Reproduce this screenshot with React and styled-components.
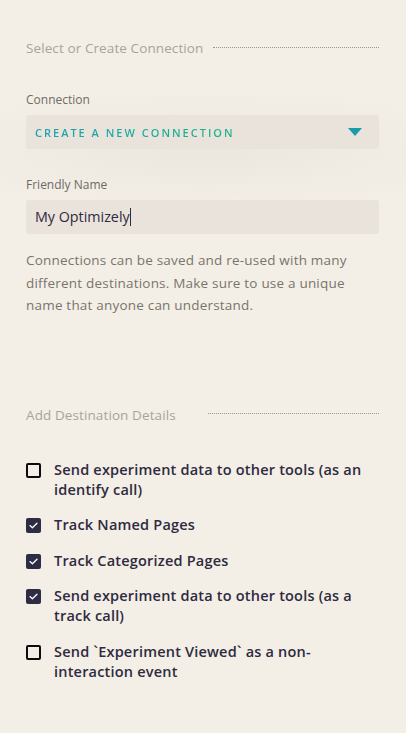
import React from 'react'
import styled, { createGlobalStyle } from 'styled-components'

const Global = createGlobalStyle`
    html, body {
        margin: 0;
        padding: 0;
        background: #f3efe6;
    }
    body {
        font-family: "Open Sans", "Noto Sans", sans-serif;
    }
`

const Page = styled.div`
    min-height: 733px;
    box-sizing: border-box;
    padding: 39px 27px 40px 26px;
    background: radial-gradient(ellipse 70% 60px at 50% 150px, #ebe6de 0%, rgba(243,239,230,0) 100%), #f3efe6;
`

const SectionHeader = styled.div`
    display: flex;
    align-items: center;
    gap: ${p => p.$lineGap || 12}px;
    font-size: 13.5px;
    letter-spacing: 0.1px;
    color: #a9a39b;
    height: 18px;
    margin-bottom: ${p => p.$gap || 32}px;

    &::after {
        content: '';
        flex: 1;
        border-top: 1px dotted #9c968e;
        margin-top: -2px;
    }
`

const Label = styled.div`
    font-size: 12px;
    color: #6f6a64;
    margin-bottom: 7px;
`

const Field = styled.div`
    display: flex;
    align-items: center;
    justify-content: space-between;
    height: 34px;
    padding: 0 17px 0 9px;
    background: #e9e3dc;
    border-radius: 3px;
    margin-bottom: ${p => p.$mb || 28}px;
`

const SelectText = styled.span`
    font-size: 11px;
    font-weight: 600;
    letter-spacing: 2px;
    background: linear-gradient(90deg, #1e9fb3, #1bb489);
    -webkit-background-clip: text;
    background-clip: text;
    color: transparent;
`

const Caret = styled.svg`
    width: 14px;
    height: 8px;
`

const InputText = styled.span`
    font-size: 14.3px;
    color: #2e2a40;
    border-right: 1px solid #2e2a40;
    line-height: 18px;
`

const Help = styled.p`
    margin: 0 0 89px;
    font-size: 13.5px;
    letter-spacing: 0.2px;
    line-height: 22.5px;
    color: #7a746d;
`

const List = styled.div`
    display: flex;
    flex-direction: column;
    gap: 15.5px;
`

const Row = styled.label`
    display: flex;
    align-items: flex-start;
    gap: 13px;
    font-size: 14.5px;
    letter-spacing: 0.2px;
    font-weight: 600;
    line-height: 20px;
    color: #2e2a40;
    padding-right: 16px;
`

const Box = styled.span`
    flex: none;
    box-sizing: border-box;
    width: 15px;
    height: 15px;
    margin-top: 3px;
    border-radius: 2px;
    display: flex;
    align-items: center;
    justify-content: center;
    background: ${p => (p.$on ? '#2e2b45' : 'transparent')};
    border: ${p => (p.$on ? 'none' : '2px solid #0c0b0d')};
`

const Check = () => (
    <svg width="9" height="7" viewBox="0 0 9 7">
        <path d="M1 3.6 L3.4 5.8 L8 1.2" fill="none" stroke="#fff" strokeWidth="1.3" strokeLinecap="round" strokeLinejoin="round" />
    </svg>
)

const options = [
    { text: 'Send experiment data to other tools (as an identify call)', on: false },
    { text: 'Track Named Pages', on: true },
    { text: 'Track Categorized Pages', on: true },
    { text: 'Send experiment data to other tools (as a track call)', on: true },
    { text: 'Send `Experiment Viewed` as a non-interaction event', on: false },
]

const App = () => (
    <Page>
        <Global />
        <SectionHeader $gap={34} $lineGap={10}>Select or Create Connection</SectionHeader>
        <Label>Connection</Label>
        <Field $mb={27}>
            <SelectText>CREATE A NEW CONNECTION</SelectText>
            <Caret viewBox="0 0 14 8">
                <path d="M0 0 H14 L7 8 Z" fill="#1a9ba9" />
            </Caret>
        </Field>
        <Label>Friendly Name</Label>
        <Field $mb={15}>
            <InputText>My Optimizely</InputText>
        </Field>
        <Help>
            Connections can be saved and re-used with many different destinations. Make sure to use a unique
            name that anyone can understand.
        </Help>
        <SectionHeader $gap={36} $lineGap={32}>Add Destination Details</SectionHeader>
        <List>
            {options.map(o => (
                <Row key={o.text}>
                    <Box $on={o.on}>{o.on && <Check />}</Box>
                    <span>{o.text}</span>
                </Row>
            ))}
        </List>
    </Page>
)

export default App
